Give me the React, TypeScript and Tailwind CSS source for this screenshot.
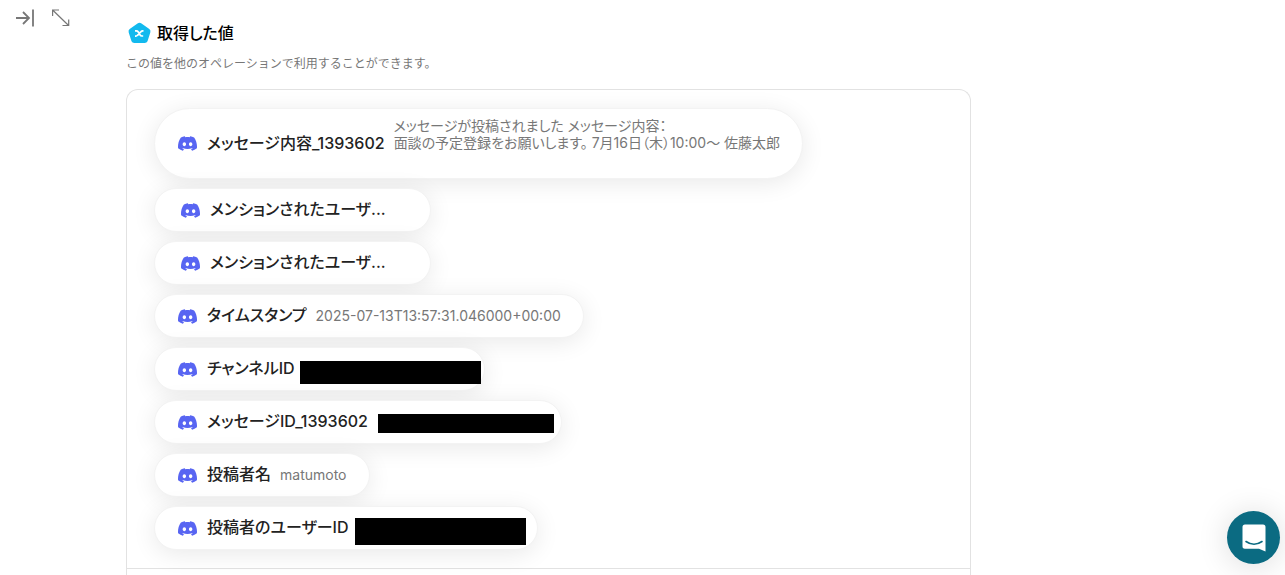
import { SiDiscord } from 'react-icons/si'
import clsx from 'clsx'

interface OutputValue {
  label: string
  value?: string
  truncated?: boolean
  // width / height of the masked block
  mask?: string
}

const values: OutputValue[] = [
  {
    label: 'メッセージ内容_1393602',
    value: 'メッセージが投稿されました メッセージ内容：\n面談の予定登録をお願いします。 7月16日（木）10:00〜 佐藤太郎\n\n',
  },
  { label: 'メンションされたユーザ...', truncated: true },
  { label: 'メンションされたユーザ...', truncated: true },
  { label: 'タイムスタンプ', value: '2025-07-13T13:57:31.046000+00:00' },
  { label: 'チャンネルID', mask: 'w-[181px] h-[23px] ml-[5px] mr-[3px] mt-2' },
  { label: 'メッセージID_1393602', mask: 'w-44 h-[19px] ml-2.5 mr-[7px] mt-1' },
  { label: '投稿者名', value: 'matumoto' },
  { label: '投稿者のユーザーID', mask: 'w-[171px] h-[27px] ml-1.5 mr-[11px] mt-2' },
]

function ValuePill({ item }: { item: OutputValue }) {
  return (
    <li
      className={clsx(
        'flex items-center rounded-[36px] border border-[#f3f3f3] bg-white pb-0.5 shadow-[0_4px_24px_rgba(0,0,0,0.09)]',
        item.value?.includes('\n') ? 'h-[71px]' : 'h-11',
        item.truncated ? 'w-[277px] pl-[26px]' : 'w-fit pl-[23px]',
        item.value && 'pr-[22px]',
      )}
    >
      <SiDiscord className="mt-0.5 mr-2.5 size-[19px] shrink-0 text-[#5865f2]" />
      <span className="text-base font-medium whitespace-nowrap text-[#222]">{item.label}</span>
      {item.value && (
        <span className="ml-[9px] text-[14px] leading-[17px] whitespace-pre-line text-[#777]">{item.value}</span>
      )}
      {item.mask && <span className={clsx('shrink-0 bg-black', item.mask)} />}
    </li>
  )
}

function PanelControls() {
  return (
    <div className="flex w-[126px] shrink-0 gap-4 pt-2 pl-4 text-[#777]">
      <button type="button" aria-label="閉じる" className="size-5">
        <svg viewBox="0 0 20 20" className="size-5" fill="none" stroke="currentColor" strokeWidth="1.8">
          <path d="M0 10h13M7 4l6 6-6 6M17 1.5v17" />
        </svg>
      </button>
      <button type="button" aria-label="拡大" className="size-5">
        <svg viewBox="0 0 20 20" className="size-5" fill="none" stroke="currentColor" strokeWidth="1.2">
          <path d="M.6 8V2h6.400M.6 2l16 15.500M10.500 17.500h6.200V11.500" />
        </svg>
      </button>
    </div>
  )
}

export default function App() {
  return (
    <div className="flex h-screen overflow-hidden bg-white font-[Inter,'Noto_Sans_CJK_JP',sans-serif] [font-feature-settings:'palt']">
      <PanelControls />
      <main className="flex max-w-[845px] flex-1 flex-col pt-[21px]">
        <h1 className="flex h-6 items-center gap-1.5 pl-0.5 text-base font-medium text-black">
          <svg viewBox="0 0 23 22" className="h-[22px] w-[23px]">
            <path
              d="M9.500 1.400Q11.500 0 13.500 1.400L21.300 7Q23 8.400 22.300 10.500L19.500 19.200Q18.800 21 16.700 21H6.300Q4.200 21 3.500 19.200L.7 10.500Q0 8.400 1.700 7Z"
              fill="#12b9ee"
            />
            <path
              d="M7 8.800h1.300q1.200 0 1.800 1l2 3.200q.6 1 1.800 1h1.300M15.500 8.800h-.8q-1 0-1.700.8l-3.500 3.700q-.7.800-1.700.8h-.8"
              fill="none"
              stroke="#fff"
              strokeWidth="1.700"
            />
          </svg>
          取得した値
        </h1>
        <p className="mt-[9px] text-[12px] leading-5 text-[#777] [font-feature-settings:normal]">
          この値を他のオペレーションで利用することができます。
        </p>
        <section className="mt-[15px] flex-1 rounded-t-xl border border-b-0 border-[#e2e2e2]">
          <ul className="flex flex-col gap-[9px] border-b border-[#e2e2e2] pt-[18px] pb-[18px] pl-[27px]">
            {values.map((item, i) => (
              <ValuePill key={i} item={item} />
            ))}
          </ul>
        </section>
      </main>
      <button
        type="button"
        aria-label="チャット"
        className="fixed right-[5px] bottom-[11px] flex size-[53px] items-center justify-center rounded-full bg-[#0b6b82] shadow-[0_2px_32px_rgba(0,0,0,0.14)]"
      >
        <svg viewBox="0 0 24 28" className="h-7 w-6">
          <path d="M3 .5h18a2.500 2.500 0 0 1 2.500 2.500v24.500l-6.500-2.800H3A2.500 2.500 0 0 1 .5 22V3A2.500 2.500 0 0 1 3 .5Z" fill="#fff" />
          <path d="M4 17.500q8 5.500 16 0" fill="none" stroke="#0b6b82" strokeWidth="1.600" strokeLinecap="round" />
        </svg>
      </button>
    </div>
  )
}
